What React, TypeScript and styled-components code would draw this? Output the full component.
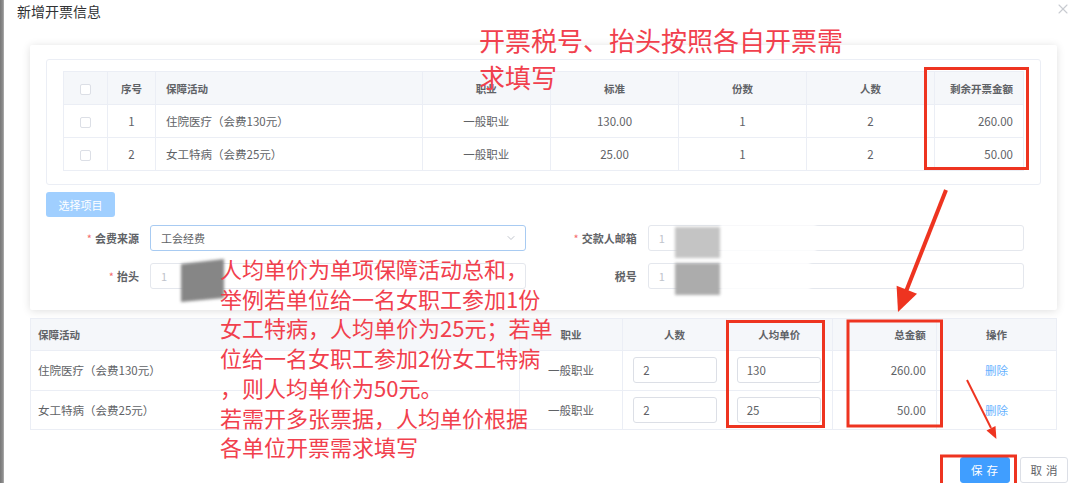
import React from "react";
import styled, { createGlobalStyle } from "styled-components";
import { ChevronDown, X } from "lucide-react";

const GlobalStyle = createGlobalStyle`
  * { box-sizing: border-box; }
  html, body { margin: 0; padding: 0; background: #fff; }
  body {
    font-family: "Noto Sans CJK SC", "Noto Sans", sans-serif;
    color: #606266;
  }
`;

type Item = {
  no: number;
  name: string;
  job: string;
  std: string;
  copies: number;
  people: number;
  remain: string;
  price: string;
  total: string;
};

const items: Item[] = [
  { no: 1, name: "住院医疗（会费130元）", job: "一般职业", std: "130.00", copies: 1, people: 2, remain: "260.00", price: "130", total: "260.00" },
  { no: 2, name: "女工特病（会费25元）", job: "一般职业", std: "25.00", copies: 1, people: 2, remain: "50.00", price: "25", total: "50.00" },
];

const Page = styled.div`
  position: relative;
  display: flex;
  width: 1080px;
  height: 483px;
  overflow: hidden;
  background: #fff;
`;

const Backdrop = styled.div`
  width: 4px;
  flex-shrink: 0;
  background: linear-gradient(90deg, #777 0%, #8e8e8e 70%, #b5b5b5 100%);
`;

const Dialog = styled.div`
  flex: 1;
  display: flex;
  flex-direction: column;
`;

const Header = styled.div`
  height: 47px;
  display: flex;
  justify-content: space-between;
  align-items: flex-start;
  padding: 1px 10px 0 13px;
`;

const Title = styled.div`
  font-size: 14px;
  line-height: 20px;
  color: #303133;
`;

const Close = styled.button`
  display: flex;
  border: 0;
  padding: 0;
  background: none;
  color: #c8cbd1;
`;

const Body = styled.div`
  padding: 0 24px 0 26px;
`;

const Card = styled.section`
  height: 265px;
  padding: 14px 16px 0;
  background: #fff;
  border-radius: 2px;
  box-shadow: 0 1px 8px rgba(0, 0, 0, 0.13);
`;

const TableFrame = styled.div`
  border: 1px solid #ebeef5;
  border-radius: 3px;
  padding: 11px 16px 13px;
`;

const Table = styled.table`
  width: 100%;
  table-layout: fixed;
  border-collapse: collapse;
`;

const HeadCell = styled.th<{ $w: number; $align?: string; $h?: number; $pl?: number }>`
  width: ${(p) => p.$w}px;
  height: ${(p) => p.$h ?? 33}px;
  padding: 0 10px 0 ${(p) => p.$pl ?? 10}px;
  background: #f5f7fa;
  border: 1px solid #ebeef5;
  font-size: 10.5px;
  font-weight: 700;
  color: #5f6266;
  text-align: ${(p) => p.$align ?? "center"};
`;

const Cell = styled.td<{ $align?: string; $h?: number; $pl?: number }>`
  height: ${(p) => p.$h ?? 33}px;
  padding: 0 10px 0 ${(p) => p.$pl ?? 10}px;
  border: 1px solid #ebeef5;
  font-size: 11.5px;
  color: #606266;
  text-align: ${(p) => p.$align ?? "center"};
  white-space: nowrap;
`;

const Check = styled.span`
  display: inline-block;
  width: 11px;
  height: 11px;
  vertical-align: middle;
  border: 1px solid #dcdfe6;
  border-radius: 2px;
  background: #fff;
`;

const PickButton = styled.button`
  display: block;
  width: 69px;
  height: 25px;
  margin-top: 7px;
  border: 0;
  border-radius: 3px;
  background: #a0cfff;
  color: #fff;
  font-family: inherit;
  font-size: 11px;
`;

const FormGrid = styled.div`
  display: grid;
  grid-template-columns: 1fr 1fr;
  column-gap: 17.5px;
  row-gap: 12px;
  margin-top: 8px;
  padding-right: 17px;
`;

const Field = styled.div`
  display: flex;
  align-items: center;
`;

const Label = styled.label`
  width: 104px;
  padding-right: 11px;
  text-align: right;
  font-size: 11px;
  font-weight: 700;
  color: #606266;
`;

const Star = styled.span`
  margin-right: 3px;
  color: #f56c6c;
  font-weight: 400;
`;

const Control = styled.div<{ $focus?: boolean }>`
  flex: 1;
  display: flex;
  align-items: center;
  justify-content: space-between;
  height: 26px;
  padding: 0 8px 0 10px;
  border: 1px solid ${(p) => (p.$focus ? "#a8cbf2" : "#e4e7ed")};
  border-radius: 3px;
  font-size: 11px;
  color: ${(p) => (p.$focus ? "#606266" : "#c0c4cc")};
`;

const LowerTable = styled(Table)`
  margin-top: 8px;
`;

const NumInput = styled.div`
  width: 84px;
  height: 26px;
  display: flex;
  align-items: center;
  padding-left: 9px;
  border: 1px solid #dcdfe6;
  border-radius: 3px;
  font-size: 11.5px;
  color: #606266;
  text-align: left;
`;

const LinkText = styled.a`
  color: #66b1ff;
  font-size: 11.5px;
  text-decoration: none;
`;

const Footer = styled.div`
  display: flex;
  justify-content: flex-end;
  gap: 10.5px;
  margin-top: 27px;
  padding-right: 13px;
`;

const Button = styled.button<{ $primary?: boolean }>`
  width: ${(p) => (p.$primary ? 50 : 48)}px;
  height: 26px;
  padding: 0 0 0 4px;
  border: 1px solid ${(p) => (p.$primary ? "#409eff" : "#dcdfe6")};
  border-radius: 3px;
  background: ${(p) => (p.$primary ? "#409eff" : "#fff")};
  color: ${(p) => (p.$primary ? "#fff" : "#606266")};
  font-family: inherit;
  font-size: 11.5px;
  letter-spacing: 4px;
`;

const Overlay = styled.svg`
  position: absolute;
  left: 0;
  top: 0;
  pointer-events: none;
`;

const Note = styled.div<{ $x: number; $y: number; $size: number; $lh: number }>`
  position: absolute;
  left: ${(p) => p.$x}px;
  top: ${(p) => p.$y}px;
  font-size: ${(p) => p.$size}px;
  line-height: ${(p) => p.$lh}px;
  color: #f1404d;
  white-space: pre;
  pointer-events: none;
`;

const RED = "#ee3420";

export default function App() {
  return (
    <>
      <GlobalStyle />
      <Page>
        <Backdrop />
        <Dialog>
          <Header>
            <Title>新增开票信息</Title>
            <Close aria-label="close">
              <X size={16} strokeWidth={1.6} />
            </Close>
          </Header>
          <Body>
            <Card>
              <TableFrame>
                <Table>
                  <thead>
                    <tr>
                      <HeadCell $w={44}><Check /></HeadCell>
                      <HeadCell $w={48}>序号</HeadCell>
                      <HeadCell $w={266.5} $align="left">保障活动</HeadCell>
                      <HeadCell $w={128.5}>职业</HeadCell>
                      <HeadCell $w={128}>标准</HeadCell>
                      <HeadCell $w={128}>份数</HeadCell>
                      <HeadCell $w={128}>人数</HeadCell>
                      <HeadCell $w={89} $align="right">剩余开票金额</HeadCell>
                    </tr>
                  </thead>
                  <tbody>
                    {items.map((it) => (
                      <tr key={it.no}>
                        <Cell><Check /></Cell>
                        <Cell>{it.no}</Cell>
                        <Cell $align="left">{it.name}</Cell>
                        <Cell>{it.job}</Cell>
                        <Cell>{it.std}</Cell>
                        <Cell>{it.copies}</Cell>
                        <Cell>{it.people}</Cell>
                        <Cell $align="right">{it.remain}</Cell>
                      </tr>
                    ))}
                  </tbody>
                </Table>
              </TableFrame>
              <PickButton>选择项目</PickButton>
              <FormGrid>
                <Field>
                  <Label><Star>*</Star>会费来源</Label>
                  <Control $focus>
                    工会经费
                    <ChevronDown size={12} color="#c0c4cc" />
                  </Control>
                </Field>
                <Field>
                  <Label><Star>*</Star>交款人邮箱</Label>
                  <Control>1</Control>
                </Field>
                <Field>
                  <Label><Star>*</Star>抬头</Label>
                  <Control>1</Control>
                </Field>
                <Field>
                  <Label>税号</Label>
                  <Control>1</Control>
                </Field>
              </FormGrid>
            </Card>
            <LowerTable>
              <thead>
                <tr>
                  <HeadCell $w={488.5} $h={32} $align="left" $pl={7}>保障活动</HeadCell>
                  <HeadCell $w={103.2} $h={32}>职业</HeadCell>
                  <HeadCell $w={103.3} $h={32}>人数</HeadCell>
                  <HeadCell $w={106} $h={32}>人均单价</HeadCell>
                  <HeadCell $w={104} $h={32} $align="right">总金额</HeadCell>
                  <HeadCell $w={120} $h={32}>操作</HeadCell>
                </tr>
              </thead>
              <tbody>
                {items.map((it) => (
                  <tr key={it.no}>
                    <Cell $h={39.5} $align="left" $pl={7}>{it.name}</Cell>
                    <Cell $h={39.5}>{it.job}</Cell>
                    <Cell $h={39.5} $align="left"><NumInput>{it.people}</NumInput></Cell>
                    <Cell $h={39.5} $align="left"><NumInput>{it.price}</NumInput></Cell>
                    <Cell $h={39.5} $align="right">{it.total}</Cell>
                    <Cell $h={39.5}><LinkText href="#">删除</LinkText></Cell>
                  </tr>
                ))}
              </tbody>
            </LowerTable>
          </Body>
          <Footer>
            <Button $primary>保存</Button>
            <Button>取消</Button>
          </Footer>
        </Dialog>

        <Overlay width={1080} height={483} viewBox="0 0 1080 483">
          <defs>
            <filter id="soft" x="-20%" y="-20%" width="140%" height="140%">
              <feGaussianBlur stdDeviation="1.4" />
            </filter>
          </defs>
          {/* redactions */}
          <polygon points="181,264 224,259 224,298 181,302" fill="#868686" filter="url(#soft)" />
          <rect x={720} y={224} width={96} height={34} fill="#fff" opacity={0.85} filter="url(#soft)" />
          <rect x={720} y={261} width={90} height={34} fill="#fff" opacity={0.85} filter="url(#soft)" />
          <rect x={675} y={227} width={45} height={31} fill="#c4c4c4" filter="url(#soft)" />
          <rect x={675} y={263} width={45} height={32} fill="#acacac" filter="url(#soft)" />
          {/* boxes */}
          <g fill="none" stroke={RED} strokeWidth={3}>
            <rect x={925.5} y={68.5} width={102} height={100} />
            <rect x={727.5} y={321.5} width={96} height={105} />
            <rect x={848} y={321} width={93.5} height={105} />
            <rect x={941.5} y={456} width={74} height={30} />
          </g>
          {/* arrows */}
          <line x1={946} y1={190} x2={905} y2={294} stroke={RED} strokeWidth={4} />
          <polygon points="898,312 917,293.7 896.6,285.7" fill={RED} />
          <line x1={967} y1={380} x2={991} y2={428} stroke={RED} strokeWidth={2} />
          <polygon points="996.4,439 995.5,426.1 986.5,430.6" fill={RED} />
        </Overlay>

        <Note $x={479} $y={21} $size={26} $lh={37}>
          {"开票税号、抬头按照各自开票需\n求填写"}
        </Note>
        <Note $x={220} $y={254} $size={22} $lh={29.7}>
          {"人均单价为单项保障活动总和，\n举例若单位给一名女职工参加1份\n女工特病，人均单价为25元；若单\n位给一名女职工参加2份女工特病\n，则人均单价为50元。\n若需开多张票据，人均单价根据\n各单位开票需求填写"}
        </Note>
      </Page>
    </>
  );
}
